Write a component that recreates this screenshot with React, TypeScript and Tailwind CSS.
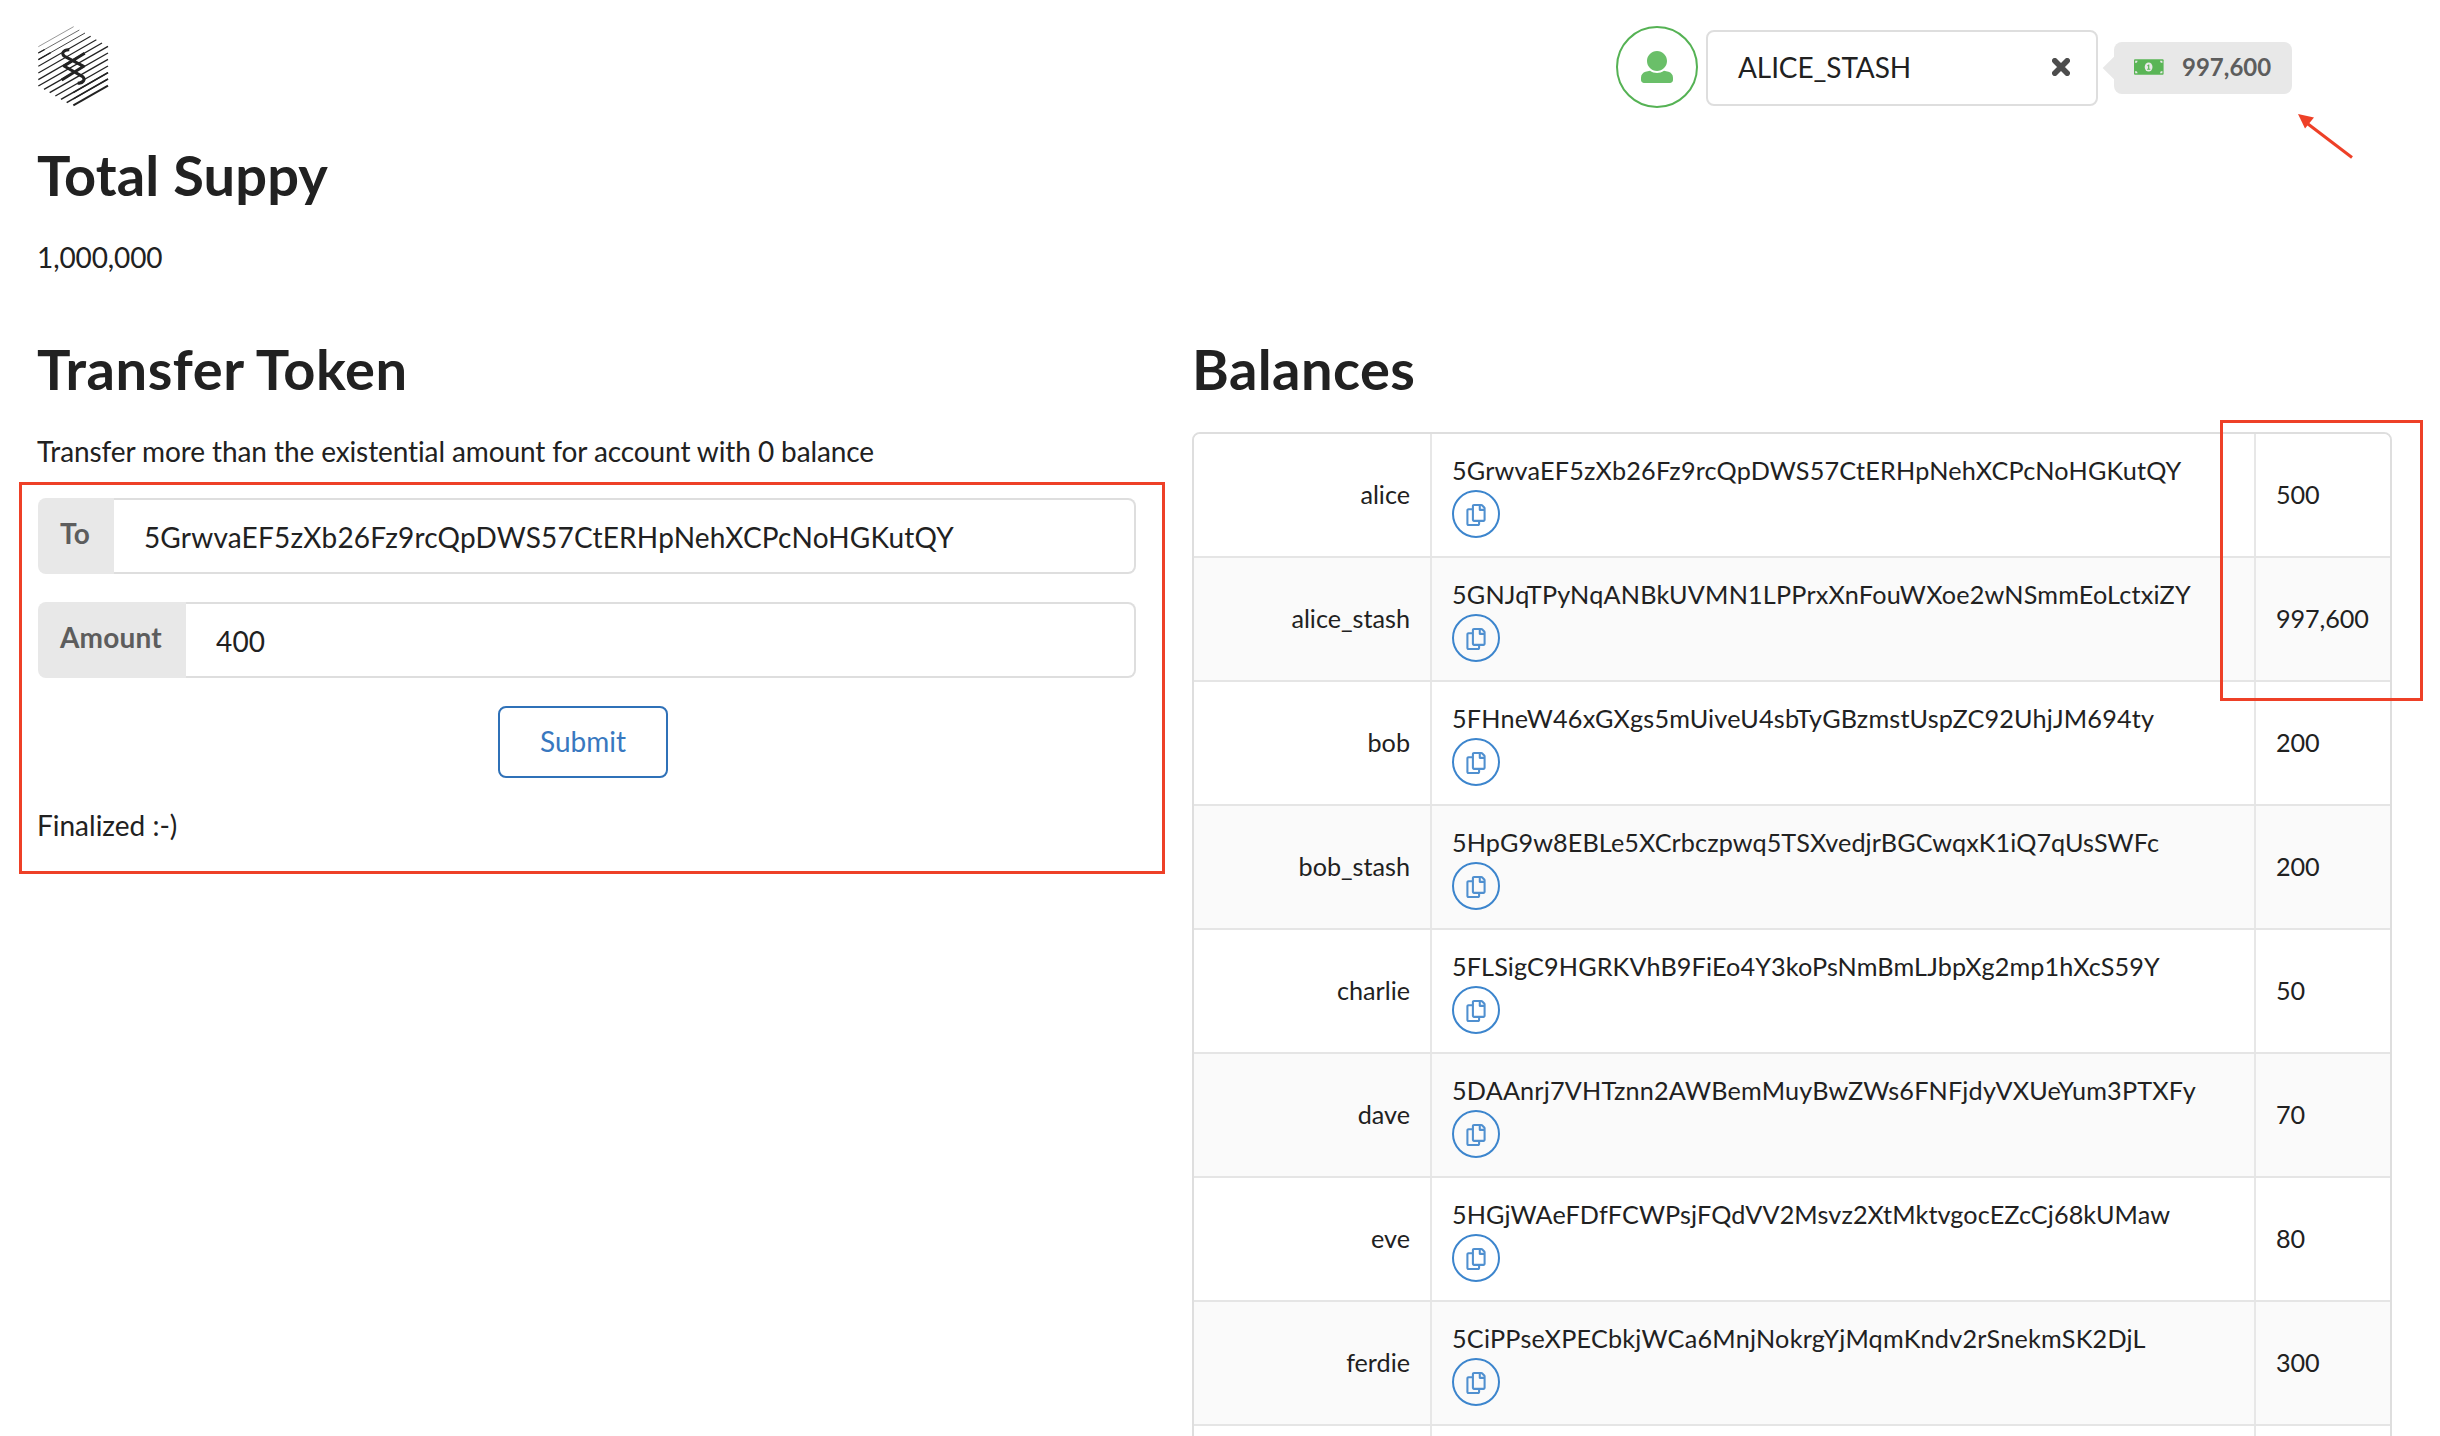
import React from "react";
import { FaRegCopy } from "react-icons/fa";

const accounts = [
  { name: "alice", address: "5GrwvaEF5zXb26Fz9rcQpDWS57CtERHpNehXCPcNoHGKutQY", balance: "500", tracking: "tracking-[0.2px]" },
  { name: "alice_stash", address: "5GNJqTPyNqANBkUVMN1LPPrxXnFouWXoe2wNSmmEoLctxiZY", balance: "997,600", tracking: "tracking-[0.2px]" },
  { name: "bob", address: "5FHneW46xGXgs5mUiveU4sbTyGBzmstUspZC92UhjJM694ty", balance: "200", tracking: "tracking-[0.2px]" },
  { name: "bob_stash", address: "5HpG9w8EBLe5XCrbczpwq5TSXvedjrBGCwqxK1iQ7qUsSWFc", balance: "200", tracking: "tracking-[0.1px]" },
  { name: "charlie", address: "5FLSigC9HGRKVhB9FiEo4Y3koPsNmBmLJbpXg2mp1hXcS59Y", balance: "50", tracking: "tracking-[0.13px]" },
  { name: "dave", address: "5DAAnrj7VHTznn2AWBemMuyBwZWs6FNFjdyVXUeYum3PTXFy", balance: "70", tracking: "tracking-[0.19px]" },
  { name: "eve", address: "5HGjWAeFDfFCWPsjFQdVV2Msvz2XtMktvgocEZcCj68kUMaw", balance: "80", tracking: "tracking-[0.1px]" },
  { name: "ferdie", address: "5CiPPseXPECbkjWCa6MnjNokrgYjMqmKndv2rSnekmSK2DjL", balance: "300", tracking: "tracking-[0.23px]" },
];

// Hatch lines of the hexagonal logo: [x1, y1, x2, y2, stroke width]
const hatch = [
  [55, 108, 161, 48, 1.4],
  [55, 127, 178, 58, 2],
  [55, 147, 195, 67, 2.6],
  [55, 167, 212, 77, 3.2],
  [55, 187, 229, 87, 3.6],
  [55, 207, 246, 97, 4],
  [55, 226, 264, 107, 4.2],
  [72, 236, 264, 127, 4],
  [89, 246, 264, 146, 4],
  [106, 256, 264, 166, 4.2],
  [123, 266, 264, 186, 4.6],
  [140, 276, 264, 205, 4.6],
  [160, 284, 264, 225, 6],
];

function Logo() {
  return (
    <svg className="block h-[82px] w-[72px]" viewBox="51 46 216 246" fill="none" stroke="#222">
      {hatch.map(([x1, y1, x2, y2, w]) => (
        <line key={y1} x1={x1} y1={y1} x2={x2} y2={y2} strokeWidth={w} />
      ))}
      <path d="M55 127L74 116.5M55 147L92 126M160 246L264 186M160 265L264 205" strokeWidth="4.2" />
      <path
        d="M148 117C130 116 122 130 134 137L191 167L125 208M194 128L132 166L188 198C197 206 190 220 173 217"
        strokeWidth="9"
        strokeLinejoin="round"
      />
    </svg>
  );
}

function UserIcon() {
  return (
    <svg className="size-8" viewBox="0 0 512 512" fill="#6abf69">
      <path d="M256 0c88.366 0 160 71.634 160 160s-71.634 160-160 160S96 248.366 96 160 167.634 0 256 0zm183.283 333.821l-71.313-17.828c-74.923 53.89-165.738 41.864-223.94 0l-71.313 17.828C29.981 344.505 0 382.903 0 426.955V464c0 26.51 21.49 48 48 48h416c26.51 0 48-21.49 48-48v-37.045c0-44.052-29.981-82.45-72.717-93.134z" />
    </svg>
  );
}

function MoneyIcon() {
  return (
    <svg className="-mt-0.5 h-4 w-[30px]" viewBox="0 0 30 16">
      <rect x="0" y="0.3" width="29.6" height="15.4" rx="1" fill="#5ab556" />
      <ellipse cx="14.6" cy="8" rx="3.9" ry="4.6" fill="#e8e8e8" />
      <path d="M13.2 6.4l1.3-.8h.8v4.2h1v1h-3.2v-1h1V7l-.9.3z" fill="#5ab556" />
      <path
        d="M1.2 1.7h2.4a2.4 2.4 0 0 1-2.4 2.4zM28.4 1.7H26a2.4 2.4 0 0 0 2.4 2.4zM1.2 14.3h2.4a2.4 2.4 0 0 0-2.4-2.4zM28.4 14.3H26a2.4 2.4 0 0 1 2.4-2.4z"
        fill="#e8e8e8"
      />
    </svg>
  );
}

function CloseIcon() {
  return (
    <svg className="size-[18px]" viewBox="0 0 18 18" fill="none" stroke="#4d4d4d" strokeWidth="5.6">
      <path d="M2.8 2.8L15.2 15.2M15.2 2.8L2.8 15.2" strokeLinecap="round" />
    </svg>
  );
}

function Field({ label, value }: { label: string; value: string }) {
  return (
    <div className="flex h-[76px]">
      <div className="rounded-l-[8px] bg-[#e8e8e8] pl-[22px] pr-6 pt-[15px] font-bold leading-10 tracking-[0.2px] text-[#5d5d5d]">
        {label}
      </div>
      <div className="flex-1 rounded-r-[8px] border-2 border-l-0 border-[#dedede] pl-[30px] pt-[17px] leading-10 tracking-[0.2px]">
        {value}
      </div>
    </div>
  );
}

type RowProps = { name: string; address: string; balance: string; tracking: string; striped: boolean };

function Row({ name, address, balance, tracking, striped }: RowProps) {
  return (
    <div
      className={
        "grid h-[124px] grid-cols-[238px_824px_1fr] border-b-2 border-[#e5e5e5] " + (striped ? "bg-[#fafafa]" : "bg-white")
      }
    >
      <div className="flex items-center justify-end border-r-2 border-[#e7e7e7] pb-0.5 pr-[20px]">{name}</div>
      <div className="border-r-2 border-[#e7e7e7] pl-[20px] pt-[18px]">
        <div className={"leading-[36px] " + tracking}>{address}</div>
        <button className="mt-0.5 flex size-12 items-center justify-center rounded-full border-2 border-[#3c85cd]">
          <FaRegCopy className="mr-px mt-0.5 size-[22px] text-[#5090d0]" />
        </button>
      </div>
      <div className="flex items-center pb-0.5 pl-[20px] tracking-[-0.1px]">{balance}</div>
    </div>
  );
}

export default function App() {
  return (
    <div className="relative h-[1436px] w-[2440px] overflow-hidden bg-white font-['Lato',sans-serif] text-[28px] leading-10 text-[#212121] [font-variant-ligatures:none]">
      <header className="flex h-[139px] items-start pl-[37px] pt-[26px]">
        <Logo />
        <div className="ml-auto mr-[148px] flex h-[82px] items-center">
          <div className="flex size-[82px] items-center justify-center rounded-full border-2 border-[#55b254]">
            <UserIcon />
          </div>
          <div className="ml-2 mt-0.5 flex h-[76px] w-[392px] items-center justify-between rounded-[8px] border-2 border-[#dedede] pb-0.5 pl-[30px] pr-[26px]">
            <span className="tracking-[-0.1px]">ALICE_STASH</span>
            <CloseIcon />
          </div>
          <div className="relative ml-4 mt-0.5 flex h-[52px] w-[178px] items-center rounded-[8px] bg-[#e8e8e8] pl-[20px] text-[24px] font-bold text-[#5d5d5d]">
            <span className="absolute left-[-8px] top-[18px] size-4 rotate-45 bg-[#e8e8e8]" />
            <MoneyIcon />
            <span className="-mt-0.5 ml-[18px]">997,600</span>
          </div>
        </div>
      </header>

      <section className="pl-[37px]">
        <h1 className="text-[56px] font-bold leading-[72px] tracking-[0.15px]">Total Suppy</h1>
        <p className="mt-[26px] tracking-[-0.1px]">1,000,000</p>
      </section>

      <main className="mt-[56px] grid grid-cols-[1098px_1200px] gap-x-[56px] pl-[38px]">
        <section>
          <h1 className="-ml-px text-[56px] font-bold leading-[72px] tracking-[0.55px]">Transfer Token</h1>
          <p className="-ml-px mt-[26px] tracking-[-0.1px]">
            Transfer more than the existential amount for account with 0 balance
          </p>
          <div className="mt-[27px] flex flex-col gap-7">
            <Field label="To" value="5GrwvaEF5zXb26Fz9rcQpDWS57CtERHpNehXCPcNoHGKutQY" />
            <Field label="Amount" value="400" />
          </div>
          <button className="ml-[460px] mt-7 flex h-[72px] w-[170px] items-center justify-center rounded-[8px] border-2 border-[#2f71b8] pb-0.5 text-[#3878bf]">
            Submit
          </button>
          <p className="-ml-px mt-[27px]">Finalized :-)</p>
        </section>

        <section>
          <h1 className="text-[56px] font-bold leading-[72px] tracking-[0.45px]">Balances</h1>
          <div className="mt-[27px] h-[1100px] overflow-hidden rounded-[8px] border-2 border-[#dedede] text-[25.2px]">
            {accounts.map((account, i) => (
              <Row key={account.name} {...account} striped={i % 2 === 1} />
            ))}
            <div className="grid h-[124px] grid-cols-[238px_824px_1fr]">
              <div className="border-r-2 border-[#e7e7e7]" />
              <div className="border-r-2 border-[#e7e7e7]" />
            </div>
          </div>
        </section>
      </main>

      {/* Red callouts over the page */}
      <div className="absolute left-[19px] top-[482px] h-[392px] w-[1146px] border-[3px] border-[#ee4027]" />
      <div className="absolute left-[2220px] top-[420px] h-[281px] w-[203px] border-[3px] border-[#ee4027]" />
      <svg className="absolute left-[2296px] top-[112px] h-[50px] w-[60px]" viewBox="0 0 60 50">
        <path d="M12 12L56 45.5" stroke="#ee4027" strokeWidth="3" />
        <path d="M2 2L18 5.5L9 16.5z" fill="#ee4027" />
      </svg>
    </div>
  );
}
